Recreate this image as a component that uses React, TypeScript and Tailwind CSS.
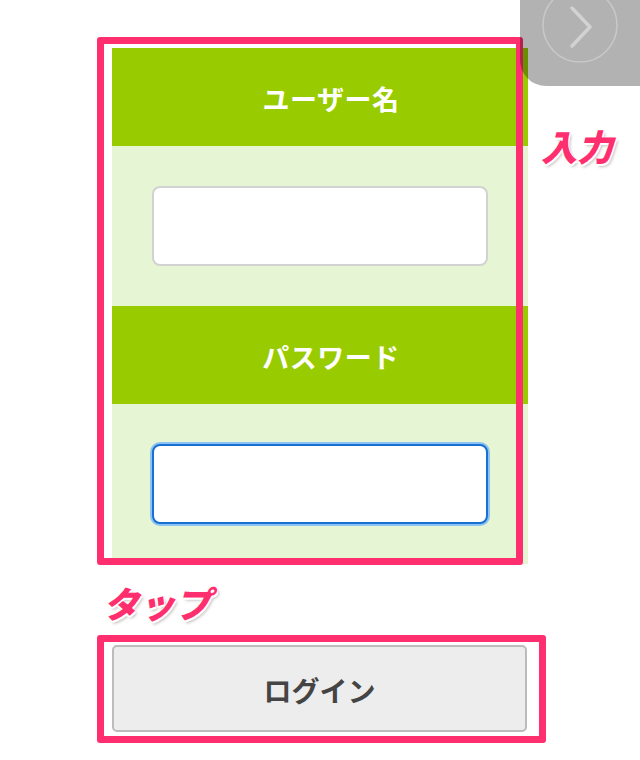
import React from "react";

const jp = { fontFamily: '"Noto Sans CJK JP", "Noto Sans", sans-serif' };

function FieldHeader({ label }: { label: string }) {
  return (
    <div className="flex h-[98px] items-center justify-center bg-[#99cc00] pl-[22px] pt-[5px] text-[27px] font-bold tracking-[0.5px] text-white">
      {label}
    </div>
  );
}

function FieldBody({ children }: { children: React.ReactNode }) {
  return <div className="flex h-[160px] items-center justify-center bg-[#e6f5d4]">{children}</div>;
}

function Note({ text, className }: { text: string; className: string }) {
  return (
    <span
      className={`absolute text-[36px] font-black italic leading-none text-[#ff2e6e] ${className}`}
      style={{ textShadow: "0 0 2px #fff, 1px 2px 0 #fff, -1px 2px 0 #fff, 2px 3px 3px rgba(0,0,0,0.25)" }}
    >
      {text}
    </span>
  );
}

export default function App() {
  return (
    <div className="relative h-[760px] w-[640px] overflow-hidden bg-white" style={jp}>
      <div className="ml-[112px] flex w-[416px] flex-col gap-[81px] pt-[48px]">
        <form className="flex flex-col">
          <FieldHeader label="ユーザー名" />
          <FieldBody>
            <input className="h-[80px] w-[336px] rounded-[8px] border-2 border-[#d2d2d2] bg-white outline-none" />
          </FieldBody>
          <FieldHeader label="パスワード" />
          <FieldBody>
            <input
              type="password"
              className="h-[80px] w-[336px] rounded-[8px] border-[2px] border-[#1a6fd3] bg-white shadow-[0_0_0_2px_#8cc3f3] outline-none"
            />
          </FieldBody>
        </form>
        <button className="flex h-[87px] w-[415px] items-center justify-center rounded-[5px] border-2 border-[#bcbcbc] bg-[#ededed] pt-[2px] text-[28px] font-bold text-[#444]">
          ログイン
        </button>
      </div>

      <div className="absolute left-[97px] top-[37px] h-[528px] w-[426px] rounded-[3px] border-[7px] border-[#ff2e6e]" />
      <div className="absolute left-[97px] top-[635px] h-[108px] w-[449px] rounded-[3px] border-[7px] border-[#ff2e6e]" />

      <Note text="入力" className="left-[541px] top-[127px]" />
      <Note text="タップ" className="left-[103px] top-[584px]" />

      <div className="absolute right-0 top-0 flex h-[86px] w-[120px] items-start justify-center rounded-bl-[26px] bg-black/30">
        <svg width="90" height="80" viewBox="0 0 90 80" className="-mt-[12px]">
          <circle cx="45" cy="37" r="37" fill="none" stroke="#c8c8c8" strokeWidth="1.5" />
          <path d="M37 20 L55 39 L37 58" fill="none" stroke="#d2d2d2" strokeWidth="3.5" strokeLinecap="round" strokeLinejoin="round" />
        </svg>
      </div>
    </div>
  );
}
